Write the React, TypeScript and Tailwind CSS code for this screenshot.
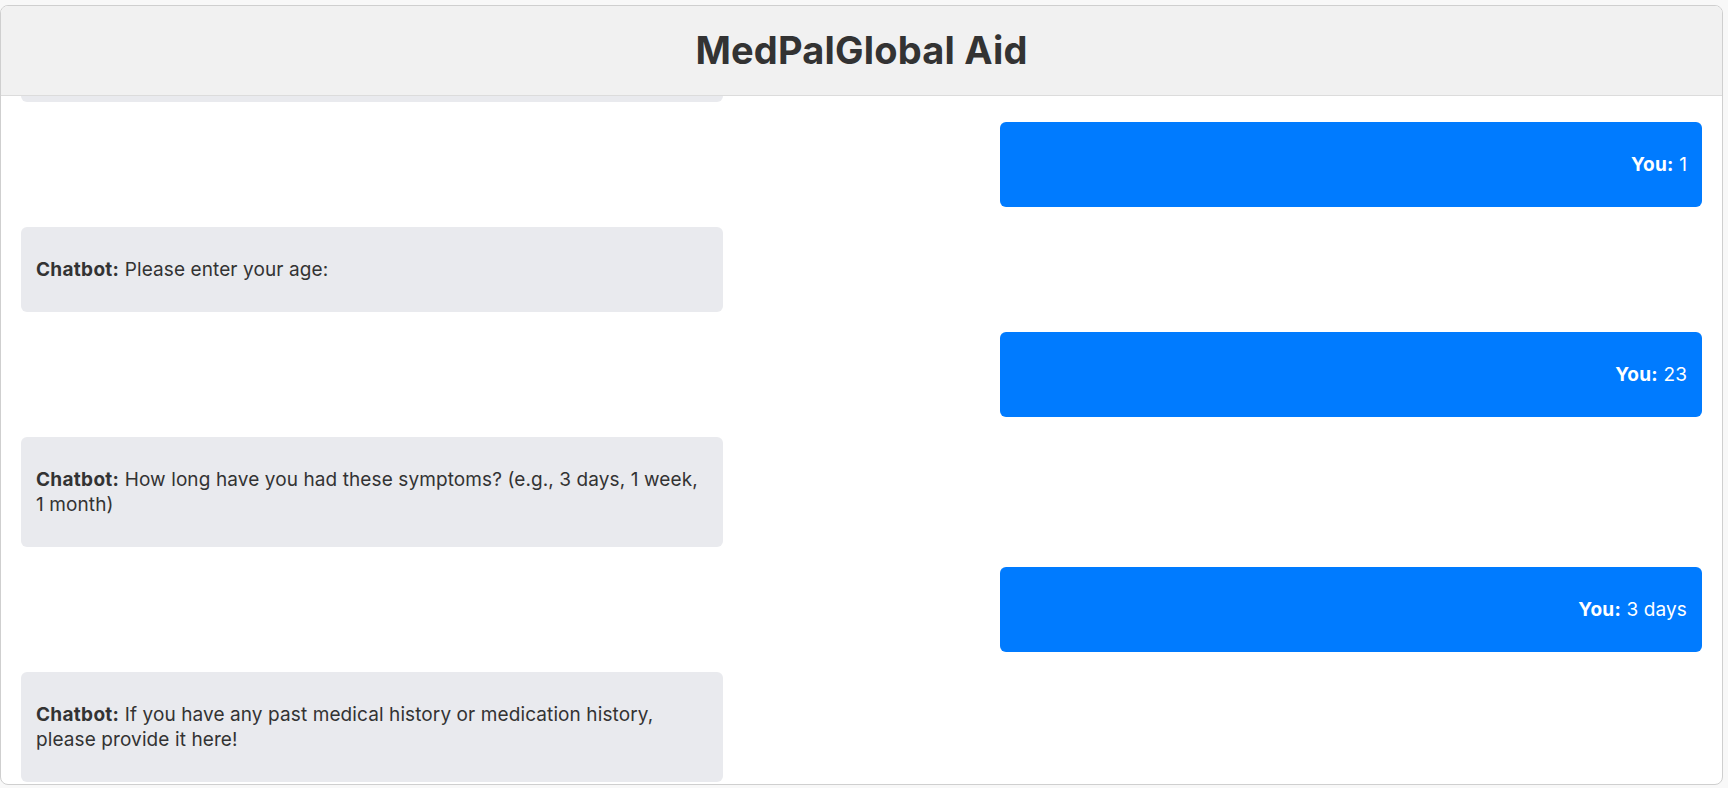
import React from "react";

type Msg = { from: "bot" | "user"; text: string };

const messages: Msg[] = [
  { from: "bot", text: "Please select your gender: 1. Male 2. Female" },
  { from: "user", text: "1" },
  { from: "bot", text: "Please enter your age:" },
  { from: "user", text: "23" },
  { from: "bot", text: "How long have you had these symptoms? (e.g., 3 days, 1 week, 1 month)" },
  { from: "user", text: "3 days" },
  { from: "bot", text: "If you have any past medical history or medication history, please provide it here!" },
];

function Bubble({ msg }: { msg: Msg }) {
  if (msg.from === "user") {
    return (
      <div className="flex justify-end">
        <div className="w-[702px] rounded-[6px] bg-[#007bff] px-[15px] py-[30px] text-right text-white">
          <span className="font-bold tracking-[0.3px]">You:</span> {msg.text}
        </div>
      </div>
    );
  }
  return (
    <div className="flex justify-start">
      <div className="w-[702px] rounded-[6px] bg-[#e9eaee] px-[15px] py-[30px] text-[#333]">
        <span className="font-bold tracking-[0.3px]">Chatbot:</span> {msg.text}
      </div>
    </div>
  );
}

export default function App() {
  return (
    <div className="h-screen bg-[#f8f8f8] pt-[5px] font-['Inter',sans-serif] overflow-hidden">
      <div className="w-[1723px] h-[780px] bg-white border border-[#cfcfcf] rounded-lg overflow-hidden flex flex-col">
        {/* Header */}
        <header className="h-[90px] shrink-0 bg-[#f1f1f1] border-b border-[#dcdcdc] flex items-center justify-center">
          <h1 className="text-[38px] font-bold text-[#333] tracking-[0.2px]">MedPalGlobal Aid</h1>
        </header>

        {/* Chat history (scrolled to bottom) */}
        <div className="flex-1 overflow-hidden px-[20px]">
          <div className="mt-[-79px] flex flex-col gap-[20px] text-[19px] leading-[25px] tracking-[0.1px]">
            {messages.map((m, i) => (
              <Bubble key={i} msg={m} />
            ))}
          </div>
        </div>
      </div>
    </div>
  );
}
